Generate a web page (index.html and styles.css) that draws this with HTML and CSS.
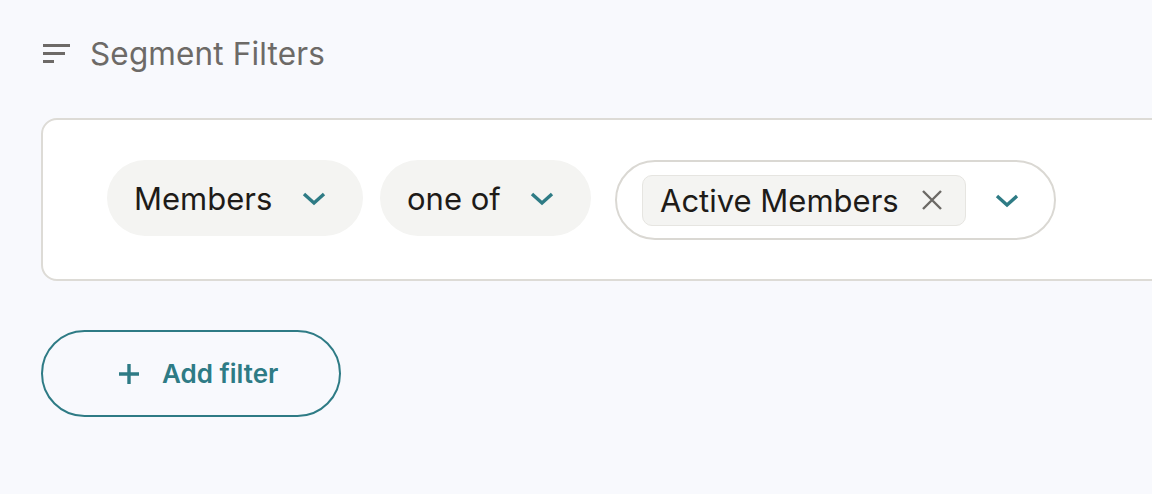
FILE: index.html
```html
<!DOCTYPE html>
<html lang="en">
<head>
<meta charset="utf-8">
<title>Segment Filters</title>
<link rel="stylesheet" href="styles.css">
</head>
<body>
<div class="page">
  <header class="header">
    <svg class="header-icon" width="28" height="20" viewBox="0 0 28 20" aria-hidden="true">
      <rect x="0" y="0" width="27" height="3" fill="#6d6a67"/>
      <rect x="0" y="8" width="22" height="3" fill="#6d6a67"/>
      <rect x="0" y="16" width="11" height="3" fill="#6d6a67"/>
    </svg>
    <h1 class="title">Segment Filters</h1>
  </header>

  <section class="card">
    <div class="filter-row">
      <button class="pill pill-members">
        <span class="pill-text">Members</span>
        <svg class="chevron" width="24" height="14" viewBox="0 0 24 14" aria-hidden="true"><path d="M2 2 L12 11 L22 2" fill="none" stroke="#2e7b85" stroke-width="3.4"/></svg>
      </button>
      <button class="pill pill-op">
        <span class="pill-text">one of</span>
        <svg class="chevron" width="24" height="14" viewBox="0 0 24 14" aria-hidden="true"><path d="M2 2 L12 11 L22 2" fill="none" stroke="#2e7b85" stroke-width="3.4"/></svg>
      </button>
      <div class="multi">
        <span class="chip">
          <span class="chip-text">Active Members</span>
          <svg class="chip-x" width="22" height="22" viewBox="0 0 22 22" aria-hidden="true"><path d="M2 2 L20 20 M20 2 L2 20" fill="none" stroke="#6b6966" stroke-width="2.4"/></svg>
        </span>
        <svg class="chevron" width="24" height="14" viewBox="0 0 24 14" aria-hidden="true"><path d="M2 2 L12 11 L22 2" fill="none" stroke="#2e7b85" stroke-width="3.4"/></svg>
      </div>
    </div>
  </section>

  <button class="add-btn">
    <svg class="plus" width="20" height="20" viewBox="0 0 20 20" aria-hidden="true"><path d="M10 0 V20 M0 10 H20" fill="none" stroke="#2e7b85" stroke-width="3.4"/></svg>
    <span>Add filter</span>
  </button>
</div>
</body>
</html>
```

FILE: styles.css
```css
* { box-sizing: border-box; }

html, body {
  margin: 0;
  padding: 0;
  background: #f8f9fd;
  overflow: hidden;
  height: 494px;
}

body {
  font-family: Inter, "Liberation Sans", Arial, sans-serif;
  color: #1e1b18;
}

.page {
  padding: 34px 0 0 41px;
}

.header {
  display: flex;
  align-items: center;
  height: 40px;
}

.header-icon {
  margin-left: 2px;
}

.title {
  margin: 0 0 0 19px;
  font-size: 31.5px;
  font-weight: 400;
  line-height: 1;
  letter-spacing: 0.15px;
  color: #6d6a67;
}

.card {
  margin-top: 44px;
  width: 1200px;
  background: #ffffff;
  border: 2px solid #dddbd6;
  border-radius: 16px;
  padding: 40px 0 39px 64px;
}

.filter-row {
  display: flex;
  align-items: flex-start;
}

.pill {
  display: flex;
  align-items: center;
  justify-content: space-between;
  height: 76px;
  border: none;
  border-radius: 38px;
  background: #f4f4f2;
  font: inherit;
  font-size: 31px;
  color: #1e1b18;
  padding: 0 37px 0 27px;
  cursor: pointer;
}

.pill-text {
  line-height: 1;
}

.pill .chevron {
  margin-top: 2px;
}

.pill-members {
  width: 256px;
}

.pill-op {
  width: 211px;
  margin-left: 17px;
}

.multi {
  display: flex;
  align-items: center;
  justify-content: space-between;
  height: 80px;
  width: 441px;
  margin-left: 24px;
  border: 2px solid #dad8d3;
  border-radius: 40px;
  background: #ffffff;
  padding: 0 35px 0 25px;
}

.chip {
  display: flex;
  align-items: center;
  justify-content: space-between;
  height: 51px;
  width: 324px;
  background: #f4f4f2;
  border: 1px solid #e6e5e1;
  border-radius: 10px;
  padding: 0 22px 0 17px;
  font-size: 31px;
}

.chip-text {
  line-height: 1;
}

.multi .chevron {
  margin-top: 2px;
}

.add-btn {
  display: flex;
  align-items: center;
  margin-top: 49px;
  width: 300px;
  height: 87px;
  border: 2px solid #2e7b85;
  border-radius: 44px;
  background: transparent;
  color: #2e7b85;
  font: inherit;
  font-size: 26px;
  font-weight: 600;
  padding: 0 0 0 76px;
  cursor: pointer;
}

.add-btn .plus {
  margin-right: 23px;
}
```
